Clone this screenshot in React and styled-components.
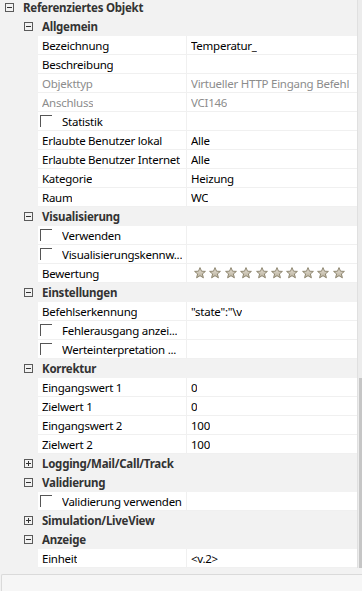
import styled, { createGlobalStyle } from "styled-components";

const GlobalStyle = createGlobalStyle`
  html, body {
    margin: 0;
    padding: 0;
    background: #f2f2f2;
    overflow: hidden;
  }
  body {
    font-family: "Noto Sans", "Segoe UI", sans-serif;
    font-size: 11.5px;
    letter-spacing: -0.25px;
  }
`;

const ROWS = [
  { type: "group", level: 0, label: "Referenziertes Objekt", open: true },
  { type: "group", level: 1, label: "Allgemein", open: true },
  { label: "Bezeichnung", value: "Temperatur_" },
  { label: "Beschreibung", value: "" },
  { label: "Objekttyp", value: "Virtueller HTTP Eingang Befehl", disabled: true },
  { label: "Anschluss", value: "VCI146", disabled: true },
  { label: "Statistik", check: true },
  { label: "Erlaubte Benutzer lokal", value: "Alle" },
  { label: "Erlaubte Benutzer Internet", value: "Alle" },
  { label: "Kategorie", value: "Heizung" },
  { label: "Raum", value: "WC" },
  { type: "group", level: 1, label: "Visualisierung", open: true },
  { label: "Verwenden", check: true },
  { label: "Visualisierungskennw...", check: true },
  { label: "Bewertung", stars: 10 },
  { type: "group", level: 1, label: "Einstellungen", open: true },
  { label: "Befehlserkennung", value: "\"state\":\"\\v" },
  { label: "Fehlerausgang anzei...", check: true },
  { label: "Werteinterpretation ...", check: true },
  { type: "group", level: 1, label: "Korrektur", open: true },
  { label: "Eingangswert 1", value: "0" },
  { label: "Zielwert 1", value: "0" },
  { label: "Eingangswert 2", value: "100" },
  { label: "Zielwert 2", value: "100" },
  { type: "group", level: 1, label: "Logging/Mail/Call/Track", open: false },
  { type: "group", level: 1, label: "Validierung", open: true },
  { label: "Validierung verwenden", check: true },
  { type: "group", level: 1, label: "Simulation/LiveView", open: false },
  { type: "group", level: 1, label: "Anzeige", open: true },
  { label: "Einheit", value: "<v.2>" },
];

function Toggle({ open }) {
  return (
    <ToggleBox>
      <svg width="9" height="9" viewBox="0 0 9 9">
        <rect x="0.5" y="0.5" width="8" height="8" fill="none" stroke="#5a5a5a" />
        <line x1="2" y1="4.5" x2="7" y2="4.5" stroke="#333" />
        {!open && <line x1="4.5" y1="2" x2="4.5" y2="7" stroke="#333" />}
      </svg>
    </ToggleBox>
  );
}

function Star() {
  return (
    <svg width="12" height="12" viewBox="0 0 12 12">
      <defs>
        <linearGradient id="sg" x1="0" y1="0" x2="0" y2="1">
          <stop offset="0" stopColor="#e6e1d6" />
          <stop offset="1" stopColor="#b9b09c" />
        </linearGradient>
      </defs>
      <path
        d="M6 0.6 L7.5 4.2 L11.4 4.4 L8.4 6.9 L9.4 10.8 L6 8.7 L2.6 10.8 L3.6 6.9 L0.6 4.4 L4.5 4.2 Z"
        fill="url(#sg)"
        stroke="#8e8670"
        strokeWidth="1"
        strokeLinejoin="round"
      />
    </svg>
  );
}

function PropRow({ row }) {
  if (row.type === "group") {
    return (
      <GroupRow $level={row.level}>
        <Toggle open={row.open} />
        <GroupTitle>{row.label}</GroupTitle>
      </GroupRow>
    );
  }
  return (
    <ItemRow>
      <LabelCell $disabled={row.disabled}>
        {row.check && <CheckBox />}
        <LabelText>{row.label}</LabelText>
      </LabelCell>
      <ValueCell $disabled={row.disabled}>
        {row.stars ? (
          <Stars>
            {Array.from({ length: row.stars }).map((_, i) => (
              <Star key={i} />
            ))}
          </Stars>
        ) : (
          <ValueText>{row.value}</ValueText>
        )}
      </ValueCell>
    </ItemRow>
  );
}

export default function App() {
  return (
    <>
      <GlobalStyle />
      <Frame>
        <Grid>
          <List>
            {ROWS.map((row, i) => (
              <PropRow key={i} row={row} />
            ))}
          </List>
          <ScrollBar>
            <Thumb />
          </ScrollBar>
        </Grid>
        <Footer />
      </Frame>
    </>
  );
}

const Frame = styled.div`
  width: 362px;
  height: 591px;
  display: flex;
  flex-direction: column;
  overflow: hidden;
`;

const Grid = styled.div`
  height: 568px;
  flex: none;
  display: flex;
  overflow: hidden;
`;

const List = styled.div`
  flex: 1;
  min-width: 0;
  margin-top: -2px;
  display: flex;
  flex-direction: column;
`;

const GroupRow = styled.div`
  height: 19px;
  flex: none;
  display: flex;
  align-items: center;
  padding-left: ${(p) => (p.$level === 0 ? 5 : 24)}px;
  background: #f2f2f2;
`;

const ToggleBox = styled.span`
  display: flex;
  width: 9px;
  height: 9px;
  margin-right: 9px;
`;

const GroupTitle = styled.span`
  font-weight: 700;
  color: #333;
  white-space: nowrap;
`;

const ItemRow = styled.div`
  height: 19px;
  flex: none;
  display: flex;
  padding-left: 38px;
  box-sizing: border-box;
`;

const LabelCell = styled.div`
  width: 149px;
  flex: none;
  display: flex;
  align-items: center;
  padding-left: 4px;
  box-sizing: border-box;
  background: #fff;
  border-bottom: 1px solid #f0f0f0;
  border-right: 1px solid #f0f0f0;
  color: ${(p) => (p.$disabled ? "#8c8c8c" : "#000")};
  overflow: hidden;
`;

const LabelText = styled.span`
  white-space: nowrap;
  overflow: hidden;
`;

const CheckBox = styled.span`
  width: 12px;
  height: 12px;
  flex: none;
  box-sizing: border-box;
  margin-left: -2px;
  margin-right: 10px;
  border-top: 1px solid #555;
  border-left: 1px solid #555;
`;

const ValueCell = styled.div`
  flex: 1;
  min-width: 0;
  display: flex;
  align-items: center;
  padding-left: 4px;
  background: #fff;
  border-bottom: 1px solid #f0f0f0;
  color: ${(p) => (p.$disabled ? "#8c8c8c" : "#000")};
  overflow: hidden;
`;

const ValueText = styled.span`
  white-space: nowrap;
  overflow: hidden;
`;

const Stars = styled.div`
  display: flex;
  gap: 3.4px;
  padding-left: 3px;
`;

const ScrollBar = styled.div`
  width: 4px;
  flex: none;
  background: #ececec;
  border-left: 1px solid #e0e0e0;
  display: flex;
  flex-direction: column;
  justify-content: flex-end;
`;

const Thumb = styled.div`
  height: 190px;
  margin-left: 1px;
  background: #c6c6c6;
`;

const Footer = styled.div`
  flex: 1;
  margin-top: 6px;
  margin-left: 1px;
  border-top: 1px solid #dadada;
  border-left: 1px solid #dadada;
  border-top-left-radius: 2px;
  background: #f6f6f6;
`;
